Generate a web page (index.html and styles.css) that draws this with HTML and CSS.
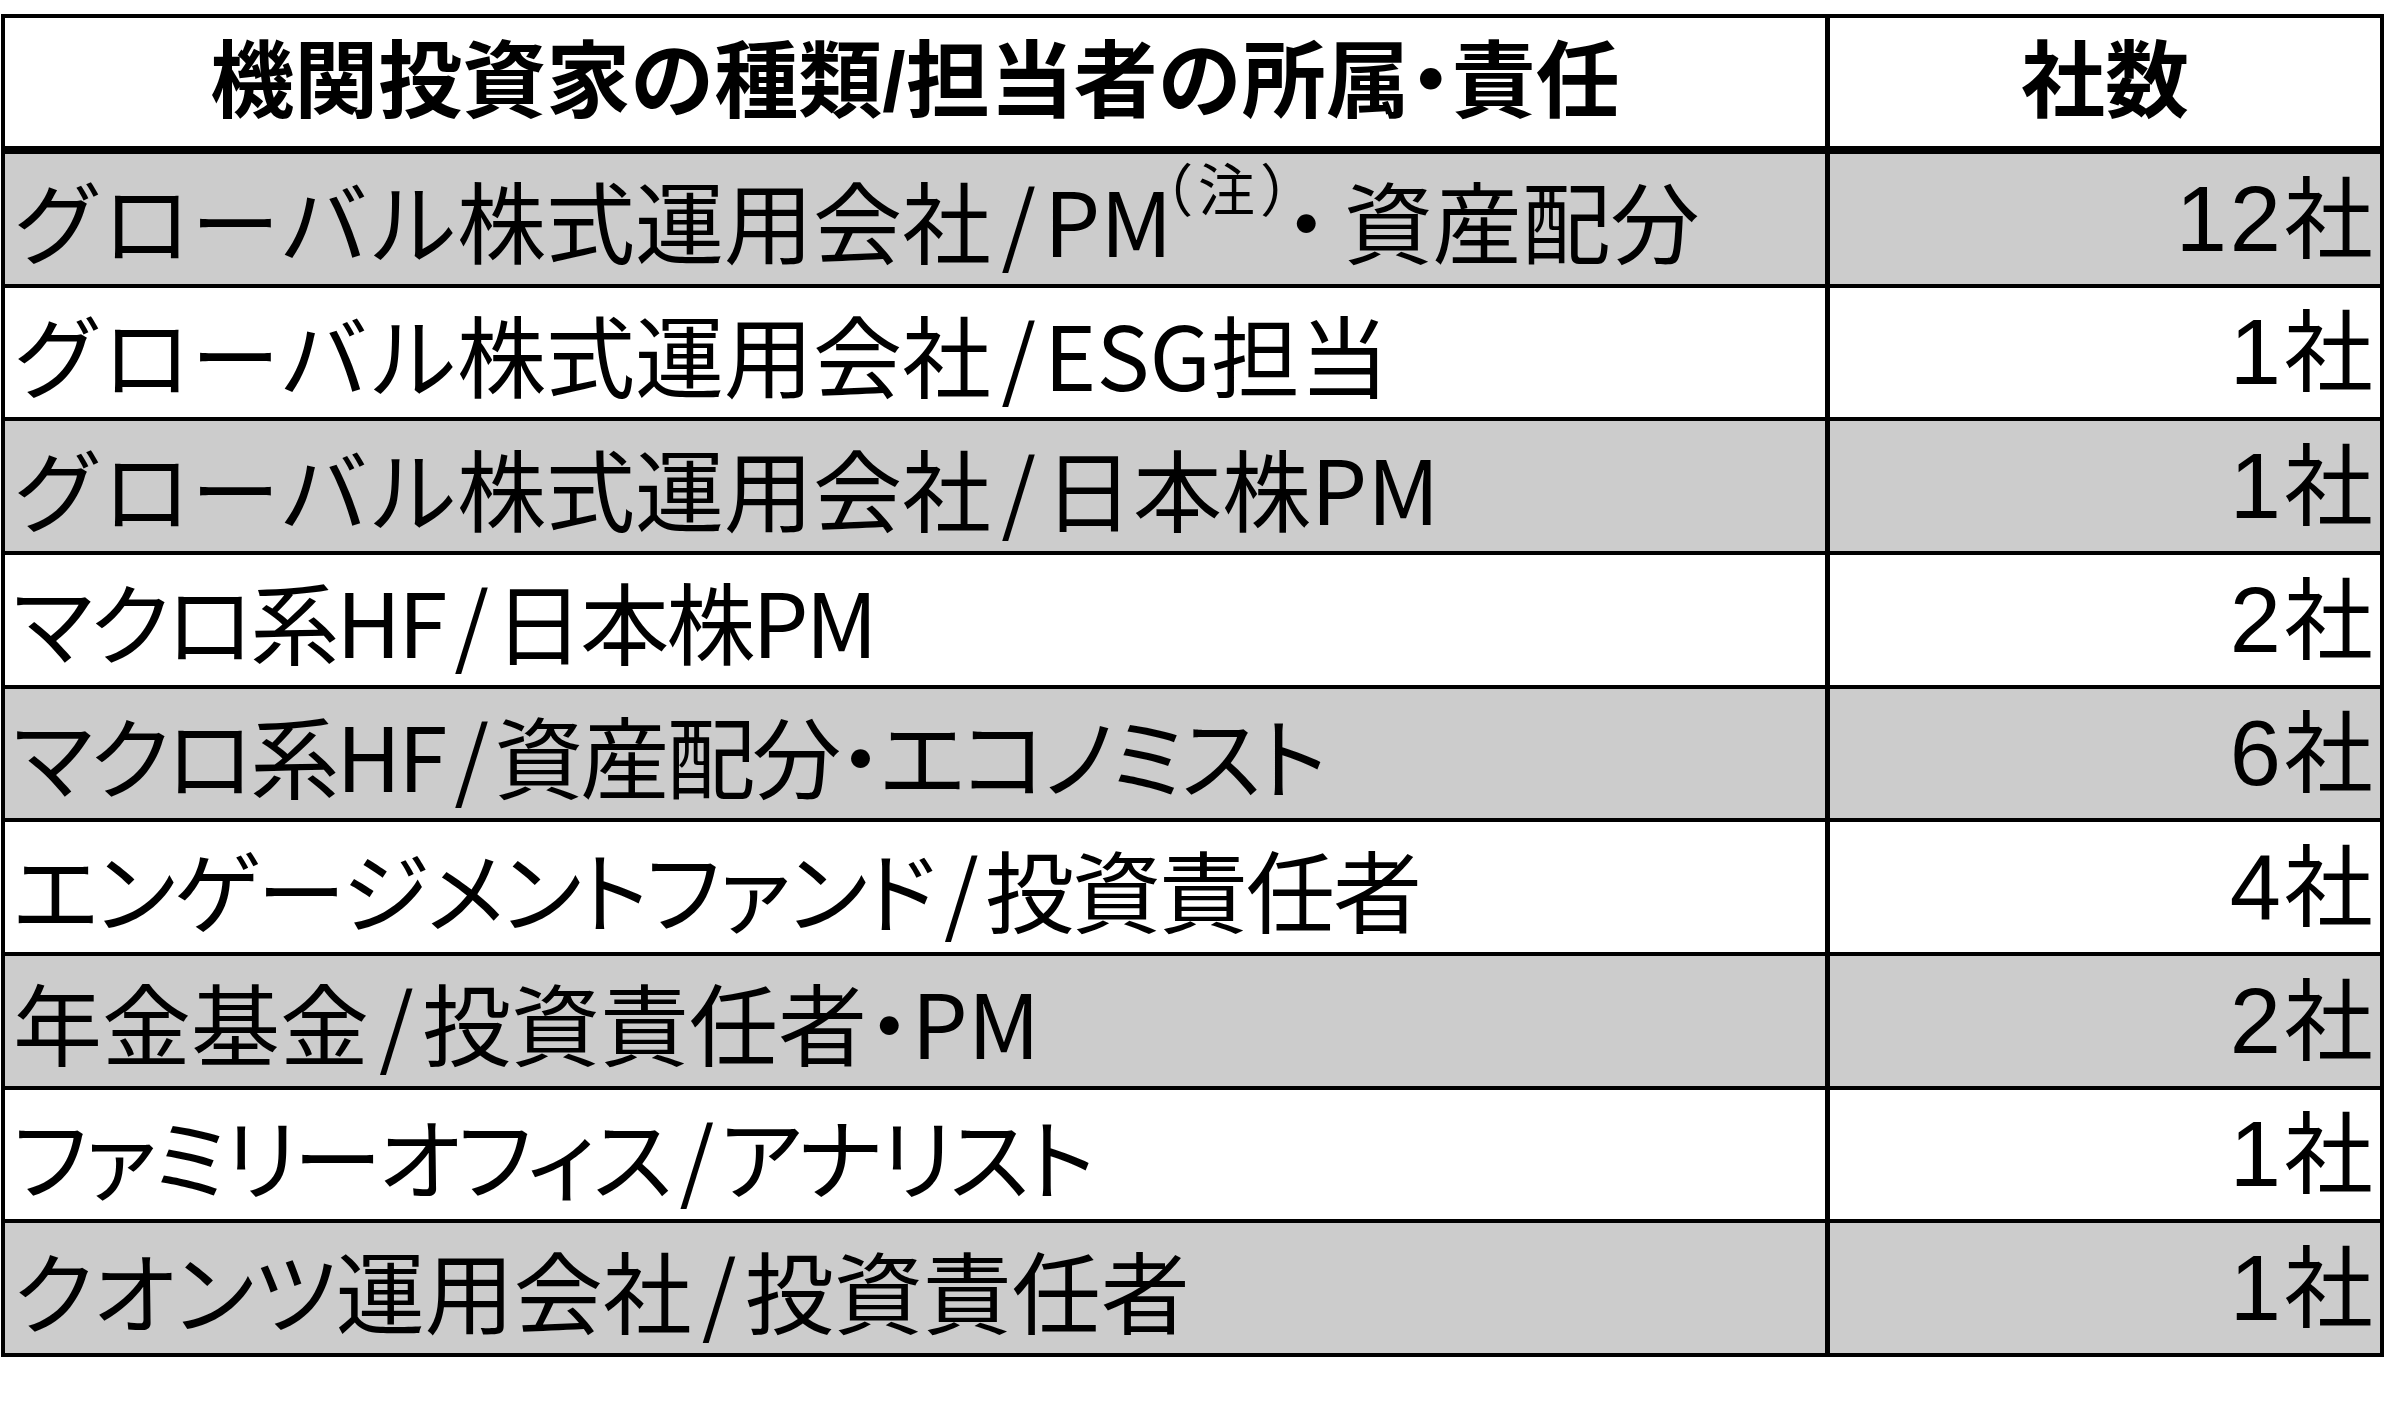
FILE: index.html
```html
<!DOCTYPE html>
<html lang="ja">
<head>
<meta charset="utf-8">
<title>機関投資家の種類</title>
<link rel="stylesheet" href="styles.css">
</head>
<body>
<div class="table">
  <div class="cell head name"><span class="t">機関投資家の種類/担当者の所属<span class="p">・</span>責任</span></div>
  <div class="cell head count"><span class="t">社数</span></div>

  <div class="cell name gray"><span class="t">グローバル株式運用会社<span class="sl">/</span>PM<sup class="note">（注）</sup><span class="dot1">・</span>資産配分</span></div>
  <div class="cell num gray"><span class="t"><span class="dg">12</span>社</span></div>

  <div class="cell name"><span class="t">グローバル株式運用会社<span class="sl">/</span>ESG担当</span></div>
  <div class="cell num"><span class="t"><span class="dg">1</span>社</span></div>

  <div class="cell name gray"><span class="t">グローバル株式運用会社<span class="sl">/</span>日本株PM</span></div>
  <div class="cell num gray"><span class="t"><span class="dg">1</span>社</span></div>

  <div class="cell name p tight"><span class="t">マクロ系HF<span class="sl">/</span>日本株PM</span></div>
  <div class="cell num"><span class="t"><span class="dg">2</span>社</span></div>

  <div class="cell name gray p tight"><span class="t">マクロ系HF<span class="sl">/</span>資産配分・エコノミスト</span></div>
  <div class="cell num gray"><span class="t"><span class="dg">6</span>社</span></div>

  <div class="cell name p tight2"><span class="t">エンゲージメントファンド<span class="sl">/</span>投資責任者</span></div>
  <div class="cell num"><span class="t"><span class="dg">4</span>社</span></div>

  <div class="cell name gray p"><span class="t">年金基金<span class="sl">/</span>投資責任者・PM</span></div>
  <div class="cell num gray"><span class="t"><span class="dg">2</span>社</span></div>

  <div class="cell name p tight"><span class="t">ファミリーオフィス<span class="sl">/</span>アナリスト</span></div>
  <div class="cell num"><span class="t"><span class="dg">1</span>社</span></div>

  <div class="cell name gray p"><span class="t">クオンツ運用会社<span class="sl">/</span>投資責任者</span></div>
  <div class="cell num gray"><span class="t"><span class="dg">1</span>社</span></div>
</div>
</body>
</html>
```
FILE: styles.css
```css
html, body {
  margin: 0;
  padding: 0;
  background: #ffffff;
}

body {
  font-family: "Liberation Sans", "Noto Sans CJK JP", sans-serif;
  color: #000000;
}

.table {
  box-sizing: border-box;
  margin: 14px 0 0 1px;
  width: 2383px;
  height: 1343px;
  border: 4px solid #000000;
  background: #000000;
  display: grid;
  grid-template-columns: 1820px 1fr;
  grid-template-rows: 132px repeat(9, 1fr);
  column-gap: 5px;
  row-gap: 4px;
}

.cell {
  background: #ffffff;
  display: flex;
  align-items: center;
  font-size: 89px;
  line-height: 1;
  white-space: nowrap;
}

.cell.gray {
  background: #cccccc;
}

.t {
  display: block;
}

.name {
  font-family: "Noto Sans CJK JP", sans-serif;
  padding-left: 8px;
}

.head {
  margin-bottom: 4px;
  justify-content: center;
  font-family: "Liberation Sans", "Noto Sans CJK JP", sans-serif;
  font-weight: bold;
  font-size: 84px;
  padding-left: 0;
}

.num {
  justify-content: flex-end;
  padding-right: 7px;
}

.dg {
  font-size: 92px;
  letter-spacing: 3px;
}

.p {
  font-feature-settings: "palt";
}

.tight {
  letter-spacing: -3px;
}

.tight2 {
  letter-spacing: -2px;
}

.sl {
  margin: 0 8px 0 10px;
}

.note {
  font-size: 57px;
  font-feature-settings: "palt";
  letter-spacing: 7px;
  vertical-align: 46px;
  line-height: 0;
  margin-left: -10px;
}

.dot1 {
  margin: 0 -7px 0 -36px;
}
```
